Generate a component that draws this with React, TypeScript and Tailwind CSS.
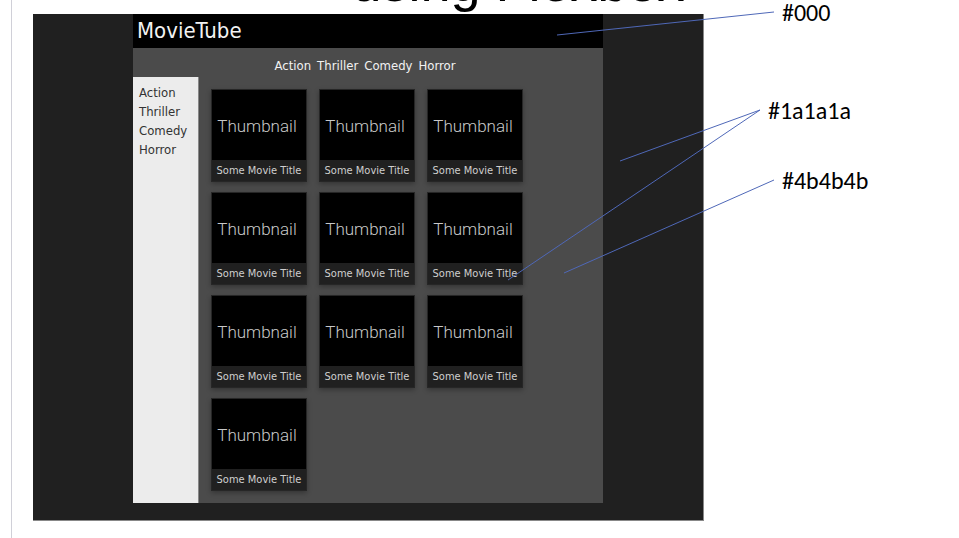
import React from "react";

const genres = ["Action", "Thriller", "Comedy", "Horror"];
const movies = Array.from({ length: 10 }, (_, i) => i);

function MovieCard() {
  return (
    <article className="flex h-[93px] w-24 flex-col border border-[#262626] bg-[#202020] shadow-[0_2px_5px_rgba(0,0,0,0.3)]">
      <div className="flex h-[70px] shrink-0 items-center justify-center bg-black pr-1 pt-1 font-['Roboto','Open_Sans',sans-serif] text-[17px] font-light text-[#c8c8c8]">
        Thumbnail
      </div>
      <h2 className="pt-px text-center text-[11px] leading-5 text-[#cfcfcf]">Some Movie Title</h2>
    </article>
  );
}

function MovieSite() {
  return (
    <div className="border-r border-b border-[#888] bg-[#202020] px-[100px] pb-[17px] font-['DejaVu_Sans_Condensed','DejaVu_Sans',sans-serif]">
      <div className="bg-[#4b4b4b]">
        <header className="bg-black px-1">
          <h1 className="text-[22px] leading-[34px] text-[#f2f2f2]">MovieTube</h1>
        </header>
        <nav className="flex h-[29px] items-center justify-center gap-[6px] pr-[6px] pt-[6px] text-[13px] text-[#f2f2f2]">
          {genres.map((g) => (
            <a key={g} href="#">{g}</a>
          ))}
        </nav>
        <div className="flex">
          <aside className="w-[66px] shrink-0 border-r border-[#888] bg-[#ececec] px-[6px] py-[6px] text-[13px] leading-[19px] text-[#333]">
            {genres.map((g) => (
              <a key={g} href="#" className="block">{g}</a>
            ))}
          </aside>
          <main className="flex flex-1 flex-wrap gap-x-3 gap-y-[10px] px-3 py-3">
            {movies.map((m) => (
              <MovieCard key={m} />
            ))}
          </main>
        </div>
      </div>
    </div>
  );
}

export default function App() {
  return (
    <div className="relative h-screen overflow-hidden bg-white pl-[11px] text-black">
      <div className="h-full border-l border-[#d0d0d8] pl-[21px]">
        <div className="flex h-[14px] items-end justify-center overflow-hidden pl-11">
          <p className="whitespace-nowrap font-['Liberation_Sans',sans-serif] text-[54px] leading-[64px]">using Flexbox</p>
        </div>
        <div className="mr-[255px]">
          <MovieSite />
        </div>
      </div>
      <svg className="absolute left-0 top-0" width="959" height="538" fill="none" stroke="#4f68b8" strokeWidth="1">
        <path d="M557 35L774 12M620 161L760 110L508 280M564 273L774 180" />
      </svg>
      <div className="font-['Carlito','Lato',sans-serif] text-[24px] leading-[26px]">
        <span className="absolute left-[782px] top-0">#000</span>
        <span className="absolute left-[768px] top-[98px]">#1a1a1a</span>
        <span className="absolute left-[782px] top-[168px]">#4b4b4b</span>
      </div>
    </div>
  );
}
